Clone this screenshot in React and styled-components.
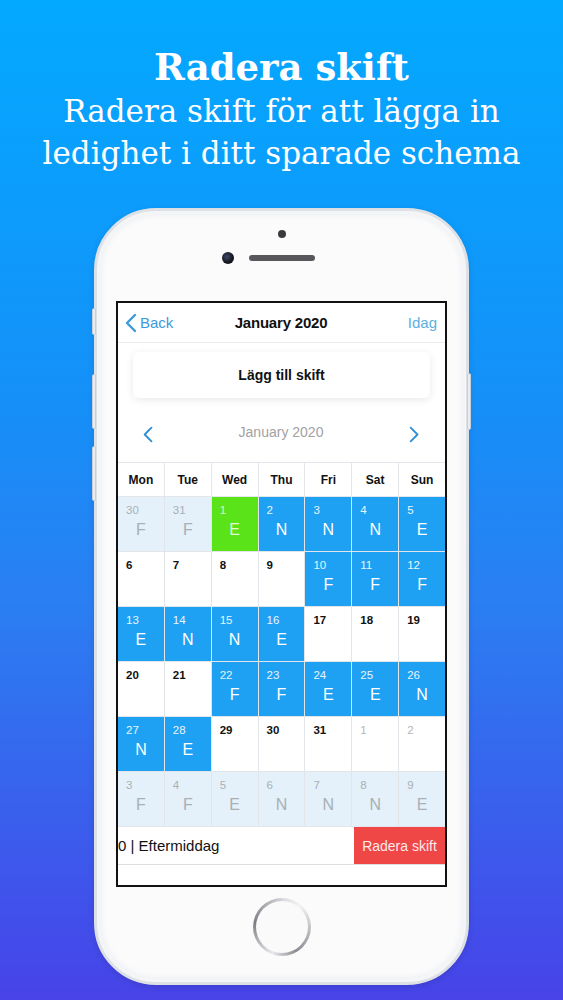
import React from 'react';
import styled, { createGlobalStyle } from 'styled-components';

const GlobalStyle = createGlobalStyle`
  html, body {
    margin: 0;
    padding: 0;
  }
  * {
    box-sizing: border-box;
  }
`;

const Page = styled.div`
  width: 563px;
  height: 1000px;
  overflow: hidden;
  display: flex;
  flex-direction: column;
  align-items: center;
  background: linear-gradient(180deg, #03a9ff 0%, #1590f8 40%, #2a7ff2 60%, #4743e8 100%);
  font-family: 'Liberation Sans', Arial, sans-serif;
`;

const Headline = styled.h1`
  margin: 44px 0 0;
  font-family: 'DejaVu Serif', 'Liberation Serif', serif;
  font-weight: 700;
  font-size: 37px;
  line-height: 46px;
  color: #fff;
`;

const Subline = styled.p`
  margin: 0;
  font-family: 'DejaVu Serif', 'Liberation Serif', serif;
  font-weight: 400;
  font-size: 31px;
  line-height: 42px;
  color: #fff;
  text-align: center;
  white-space: nowrap;
`;

const Phone = styled.div`
  position: relative;
  margin-top: 34px;
  width: 375px;
  height: 777px;
  flex-shrink: 0;
  border-radius: 62px;
  background: #fbfbfc;
  border: 3px solid #dde1e6;
  box-shadow: inset 0 0 0 3px #f4f5f7, inset 0 0 6px 4px #eceef1, 0 2px 6px rgba(0, 0, 0, 0.12);
  display: flex;
  flex-direction: column;
  align-items: center;
`;

const SideKey = styled.div`
  position: absolute;
  width: 4px;
  border-radius: 2px;
  background: #e9edf2;
  border: 1px solid #c9ced6;
  ${(p) => (p.$right ? 'right: -5px;' : 'left: -5px;')}
  top: ${(p) => p.$top}px;
  height: ${(p) => p.$h}px;
`;

const TopBezel = styled.div`
  height: 90px;
  width: 100%;
  display: flex;
  flex-direction: column;
  align-items: center;
  padding-top: 19px;
`;

const Sensor = styled.div`
  width: 8px;
  height: 8px;
  border-radius: 50%;
  background: #3a3a3e;
`;

const EarRow = styled.div`
  margin-top: 14px;
  display: flex;
  align-items: center;
  gap: 15px;
  margin-left: -27px;
`;

const Camera = styled.div`
  width: 12px;
  height: 12px;
  border-radius: 50%;
  background: radial-gradient(circle at 40% 40%, #3c4a66 0%, #14141c 60%);
`;

const Speaker = styled.div`
  width: 66px;
  height: 6px;
  border-radius: 3px;
  background: #58585c;
`;

const Screen = styled.div`
  width: 331px;
  height: 586px;
  border: 2px solid #111;
  background: #fff;
  display: flex;
  flex-direction: column;
  overflow: hidden;
`;

const NavBar = styled.div`
  height: 40px;
  flex-shrink: 0;
  display: flex;
  align-items: center;
  justify-content: space-between;
  padding: 0 8px 0 7px;
  border-bottom: 1px solid #ececec;
`;

const NavLink = styled.div`
  display: flex;
  align-items: center;
  gap: 3px;
  width: 60px;
  font-size: 15px;
  color: ${(p) => p.$color || '#3b9ada'};
  justify-content: ${(p) => (p.$end ? 'flex-end' : 'flex-start')};
`;

const NavTitle = styled.div`
  font-size: 15px;
  font-weight: 700;
  color: #111;
  letter-spacing: -0.2px;
`;

const AddCard = styled.div`
  margin: 9px 15px 0;
  height: 46px;
  flex-shrink: 0;
  display: flex;
  align-items: center;
  justify-content: center;
  border-radius: 6px;
  background: #fff;
  box-shadow: 0 2px 8px rgba(0, 0, 0, 0.09);
  font-size: 14px;
  font-weight: 700;
  color: #111;
`;

const MonthNav = styled.div`
  height: 64px;
  flex-shrink: 0;
  display: flex;
  align-items: center;
  justify-content: space-between;
  padding: 8px 26px 0 25px;
`;

const MonthLabel = styled.div`
  font-size: 14px;
  color: #a2a2a2;
  margin-top: -5px;
`;

const WeekHeader = styled.div`
  display: grid;
  grid-template-columns: repeat(7, 1fr);
  gap: 1px;
  background: #e3e6ea;
  border-top: 1px solid #e3e6ea;
  border-bottom: 1px solid #e3e6ea;
  flex-shrink: 0;
`;

const DayName = styled.div`
  height: 33px;
  background: #fff;
  display: flex;
  align-items: center;
  justify-content: center;
  font-size: 12px;
  font-weight: 700;
  color: #111;
`;

const Grid = styled.div`
  display: grid;
  grid-template-columns: repeat(7, 1fr);
  grid-auto-rows: 54px;
  gap: 1px;
  background: #e2e6ea;
  border-bottom: 1px solid #e2e6ea;
  flex-shrink: 0;
`;

const cellTheme = {
  blue: { bg: '#1ea1f2', num: '#e8f5ff', letter: '#ffffff' },
  green: { bg: '#5be31a', num: '#d8f8c4', letter: '#e4fad6' },
  faded: { bg: '#e4f1fa', num: '#a9b0b6', letter: '#a9afb4' },
  plain: { bg: '#ffffff', num: '#111111', letter: '#111111' },
  outside: { bg: '#ffffff', num: '#b5b5b5', letter: '#b5b5b5' },
};

const Cell = styled.div`
  position: relative;
  background: ${(p) => cellTheme[p.$kind].bg};
  color: ${(p) => cellTheme[p.$kind].letter};
  padding: 6px 0 0 8px;
`;

const DayNum = styled.div`
  font-size: 11.5px;
  line-height: 14px;
  color: ${(p) => cellTheme[p.$kind].num};
  font-weight: ${(p) => (p.$kind === 'plain' ? 700 : 400)};
`;

const ShiftLetter = styled.div`
  margin-left: -8px;
  margin-top: 3px;
  text-align: center;
  font-size: 16px;
  line-height: 20px;
`;

const ActionBar = styled.div`
  height: 38px;
  flex-shrink: 0;
  display: flex;
  align-items: stretch;
  border-bottom: 1px solid #dedede;
`;

const ActionText = styled.div`
  flex: 1;
  display: flex;
  align-items: center;
  font-size: 15px;
  color: #111;
  white-space: nowrap;
`;

const DeleteButton = styled.div`
  width: 91px;
  display: flex;
  align-items: center;
  justify-content: center;
  background: #ef4646;
  color: #fbeaea;
  font-size: 14px;
`;

const BottomBezel = styled.div`
  flex: 1;
  display: flex;
  justify-content: center;
  padding-top: 11px;
`;

const HomeRing = styled.div`
  width: 58px;
  height: 58px;
  border-radius: 50%;
  padding: 3px;
  background: conic-gradient(#d9dadd 0deg, #f2f3f5 40deg, #8a8b90 150deg, #e8e9eb 200deg, #7d7e83 280deg, #d3d4d7 360deg);
`;

const HomeFace = styled.div`
  width: 100%;
  height: 100%;
  border-radius: 50%;
  background: #fafafb;
`;

const Chevron = ({ dir = 'left', size = 18, color = '#3b9ada', stroke = 2.4 }) => (
  <svg width={size * 0.6} height={size} viewBox="0 0 12 20" fill="none">
    <path
      d={dir === 'left' ? 'M10 2 L2 10 L10 18' : 'M2 2 L10 10 L2 18'}
      stroke={color}
      strokeWidth={stroke}
      strokeLinecap="round"
      strokeLinejoin="round"
    />
  </svg>
);

const days = ['Mon', 'Tue', 'Wed', 'Thu', 'Fri', 'Sat', 'Sun'];

const cells = [
  ['30', 'F', 'faded'], ['31', 'F', 'faded'], ['1', 'E', 'green'], ['2', 'N', 'blue'], ['3', 'N', 'blue'], ['4', 'N', 'blue'], ['5', 'E', 'blue'],
  ['6', '', 'plain'], ['7', '', 'plain'], ['8', '', 'plain'], ['9', '', 'plain'], ['10', 'F', 'blue'], ['11', 'F', 'blue'], ['12', 'F', 'blue'],
  ['13', 'E', 'blue'], ['14', 'N', 'blue'], ['15', 'N', 'blue'], ['16', 'E', 'blue'], ['17', '', 'plain'], ['18', '', 'plain'], ['19', '', 'plain'],
  ['20', '', 'plain'], ['21', '', 'plain'], ['22', 'F', 'blue'], ['23', 'F', 'blue'], ['24', 'E', 'blue'], ['25', 'E', 'blue'], ['26', 'N', 'blue'],
  ['27', 'N', 'blue'], ['28', 'E', 'blue'], ['29', '', 'plain'], ['30', '', 'plain'], ['31', '', 'plain'], ['1', '', 'outside'], ['2', '', 'outside'],
  ['3', 'F', 'faded'], ['4', 'F', 'faded'], ['5', 'E', 'faded'], ['6', 'N', 'faded'], ['7', 'N', 'faded'], ['8', 'N', 'faded'], ['9', 'E', 'faded'],
];

export default function App() {
  return (
    <>
      <GlobalStyle />
      <Page>
        <Headline>Radera skift</Headline>
        <Subline>
          Radera skift för att lägga in
          <br />
          ledighet i ditt sparade schema
        </Subline>

        <Phone>
          <SideKey $top={97} $h={27} />
          <SideKey $top={163} $h={55} />
          <SideKey $top={235} $h={55} />
          <SideKey $right $top={162} $h={57} />

          <TopBezel>
            <Sensor />
            <EarRow>
              <Camera />
              <Speaker />
            </EarRow>
          </TopBezel>

          <Screen>
            <NavBar>
              <NavLink>
                <Chevron size={20} />
                Back
              </NavLink>
              <NavTitle>January 2020</NavTitle>
              <NavLink $end $color="#5cb0e2">Idag</NavLink>
            </NavBar>

            <AddCard>Lägg till skift</AddCard>

            <MonthNav>
              <Chevron size={17} color="#2f8fd5" stroke={2.2} />
              <MonthLabel>January 2020</MonthLabel>
              <Chevron dir="right" size={17} color="#2f8fd5" stroke={2.2} />
            </MonthNav>

            <WeekHeader>
              {days.map((d) => (
                <DayName key={d}>{d}</DayName>
              ))}
            </WeekHeader>

            <Grid>
              {cells.map(([num, letter, kind], i) => (
                <Cell key={i} $kind={kind}>
                  <DayNum $kind={kind}>{num}</DayNum>
                  {letter && <ShiftLetter>{letter}</ShiftLetter>}
                </Cell>
              ))}
            </Grid>

            <ActionBar>
              <ActionText>0 | Eftermiddag</ActionText>
              <DeleteButton>Radera skift</DeleteButton>
            </ActionBar>
          </Screen>

          <BottomBezel>
            <HomeRing>
              <HomeFace />
            </HomeRing>
          </BottomBezel>
        </Phone>
      </Page>
    </>
  );
}
